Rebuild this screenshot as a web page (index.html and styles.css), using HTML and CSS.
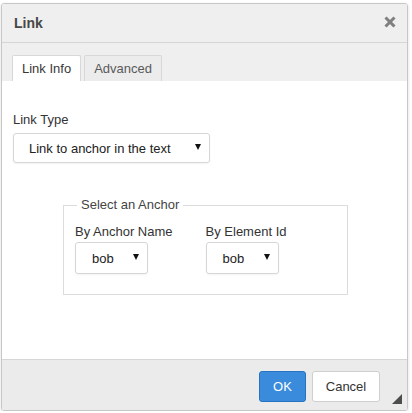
FILE: index.html
```html
<!DOCTYPE html>
<html lang="en">
<head>
  <meta charset="UTF-8">
  <title>Link</title>
  <link rel="stylesheet" href="styles.css">
</head>
<body>
  <div class="dialog">
    <div class="title">
      <span>Link</span>
      <svg class="close" width="12" height="12" viewBox="0 0 12 12">
        <path d="M1.5 1.5 L10.5 10.5 M10.5 1.5 L1.5 10.5" stroke="#7f7f7f" stroke-width="3"/>
      </svg>
    </div>

    <div class="tabs">
      <div class="tab active">Link Info</div>
      <div class="tab">Advanced</div>
    </div>

    <div class="contents">
      <label class="label">Link Type</label>
      <div class="select wide">
        <span>Link to anchor in the text</span>
        <i class="arrow"></i>
      </div>

      <fieldset class="anchor">
        <legend>Select an Anchor</legend>
        <div class="cols">
          <div class="col">
            <label class="label">By Anchor Name</label>
            <div class="select small"><span>bob</span><i class="arrow"></i></div>
          </div>
          <div class="col">
            <label class="label">By Element Id</label>
            <div class="select small"><span>bob</span><i class="arrow"></i></div>
          </div>
        </div>
      </fieldset>
    </div>

    <div class="footer">
      <button class="btn ok">OK</button>
      <button class="btn">Cancel</button>
      <i class="grip"></i>
    </div>
  </div>
</body>
</html>
```

FILE: styles.css
```css
body { margin: 0; padding: 3px 4px 0 1px; background: #fff; font-family: Arial, "Liberation Sans", sans-serif; font-size: 13px; color: #333; }
.dialog { width: 405px; height: 406px; border: 1px solid #c7c7c7; border-radius: 3px; box-shadow: 0 1px 3px rgba(0,0,0,0.15); display: flex; flex-direction: column; overflow: hidden; }
.title { height: 38px; flex: none; background: #efefef; border-bottom: 1px solid #d6d6d6; display: flex; align-items: center; justify-content: space-between; padding: 0 11px 0 12px; font-size: 14px; font-weight: bold; color: #474747; }
.close { margin-top: -2px; }
.tabs { height: 26px; flex: none; background: #efefef; padding: 12px 0 0 10px; display: flex; gap: 3px; align-items: flex-end; }
.tab { height: 25px; line-height: 25px; padding: 0 9px; border: 1px solid #d8d8d8; border-bottom: none; border-radius: 2px 2px 0 0; background: #ececec; color: #595959; font-size: 13px; }
.tab.active { background: #fff; color: #383838; }
.contents { flex: 1; background: #fff; padding: 30px 11px 0 11px; border-top: 1px solid #fff; }
.label { display: block; line-height: 16px; color: #333; }
.select { height: 30px; border: 1px solid #d6d6d6; border-radius: 3px; box-sizing: border-box; display: flex; align-items: center; justify-content: space-between; box-shadow: 0 1px 2px rgba(0,0,0,0.05); color: #222; }
.select.wide { width: 197px; margin-top: 5px; padding: 0 8px 0 15px; }
.select.small { width: 73px; margin-top: 2px; padding: 0 8px 0 16px; height: 32px; }
.arrow { width: 0; height: 0; border-left: 3px solid transparent; border-right: 3px solid transparent; border-top: 6px solid #111; margin-top: -2px; }
.anchor { margin: 35px 0 0 50px; width: 285px; height: 97px; box-sizing: border-box; border: 1px solid #dcdcdc; padding: 0 11px; }
.anchor legend { padding: 0 4px; margin-left: 2px; color: #444; line-height: 14px; }
.cols { display: flex; gap: 33px; margin-top: 12px; }
.footer { height: 51px; box-sizing: border-box; flex: none; background: #ebebeb; border-top: 1px solid #d6d6d6; display: flex; align-items: flex-start; padding: 11px 0 0 257px; gap: 6px; position: relative; }
.btn { height: 31px; border-radius: 3px; font-family: Arial, "Liberation Sans", sans-serif; font-size: 13px; padding: 0; }
.ok { width: 47px; background: #3a8bdb; border: 1px solid #2673c2; color: #fff; }
.btn:not(.ok) { width: 68px; background: #fff; border: 1px solid #cfcfcf; color: #333; }
.grip { position: absolute; right: 5px; bottom: 6px; width: 0; height: 0; border-left: 10px solid transparent; border-bottom: 10px solid #4d4d4d; }
```
